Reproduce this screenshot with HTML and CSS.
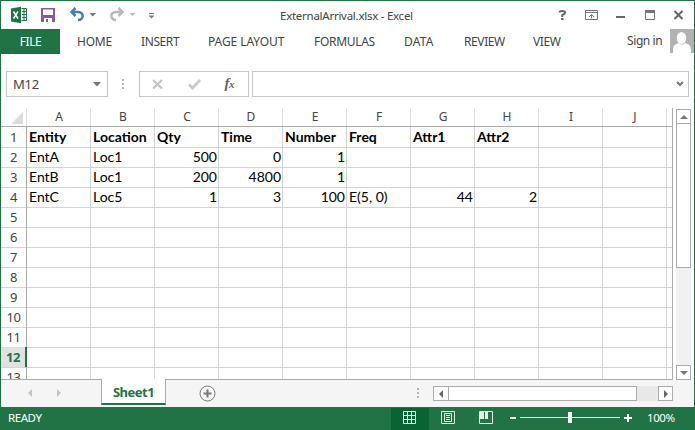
FILE: index.html
```
<!DOCTYPE html>
<html lang="en">
<head>
<meta charset="utf-8">
<title>ExternalArrival.xlsx - Excel</title>
<link rel="stylesheet" href="styles.css">
</head>
<body>
<div class="window">
  <header class="titlebar">
    <svg class="quick" width="170" height="28" viewBox="1 1 170 28">
      <path d="M11 8.500l10-1.800v16.600l-10-1.800z" fill="#217346"/>
      <path d="M21.500 8.500h5v12h-5" fill="#fff" stroke="#217346"/>
      <path d="M22 11.500h5M22 14.500h5M22 17.500h5M24 9v12" stroke="#217346"/>
      <path d="M13.500 11.500l4.500 7M18 11.500l-4.500 7" stroke="#fff" stroke-width="1.500"/>
      <path d="M41 8h14v14H41z" fill="#8757a9"/>
      <path d="M43 9.500h10V15H43zM44 18h8v4h-8z" fill="#fff"/>
      <path d="M46 19h2v3h-2z" fill="#8757a9"/>
      <path d="M75.500 8L71.500 12l4 4M71.500 12H78c6.500 0 6 8 0 8" fill="none" stroke="#4880b5" stroke-width="2.500"/>
      <path d="M89.500 13h6.500l-3.250 3.500z" fill="#777"/>
      <path d="M118.500 8l4 4-4 4M122.500 12H116c-6.500 0-6 8 0 8" fill="none" stroke="#b9b9b9" stroke-width="2.500"/>
      <path d="M129.500 13h6l-3 3z" fill="#b9b9b9"/>
      <path d="M149 13.500h5" stroke="#777"/><path d="M148.500 15.500h6l-3 3z" fill="#777"/>
    </svg>
    <h1 class="title">ExternalArrival.xlsx - Excel</h1>
    <svg class="controls" width="140" height="28" viewBox="554 1 140 28">
      <path d="M559.500 12.500q0-1.500 2.700-1.500 2.800 0 2.800 1.500 0 1.500-2.700 2.500v2M561 19h2.500" fill="none" stroke="#666" stroke-width="2"/>
      <path d="M585.500 10.500h12v9h-12zM586 12.500h11M591.500 18.500v-4M589 17l2.500-2.500 2.500 2.500" fill="none" stroke="#777"/>
      <path d="M616 17h9" stroke="#666" stroke-width="2"/>
      <path d="M645.500 11v8.500h9V11" fill="none" stroke="#777"/><path d="M645 10h10v3h-10z" fill="#777"/>
      <path d="M674.500 11l8 8M682.500 11l-8 8" stroke="#666" stroke-width="2"/>
    </svg>
  </header>
  <nav class="ribbon">
    <span class="file">FILE</span>
    <span class="tab home">HOME</span><span class="tab insert">INSERT</span><span class="tab layout">PAGE LAYOUT</span><span class="tab formulas">FORMULAS</span><span class="tab data">DATA</span><span class="tab review">REVIEW</span><span class="tab view">VIEW</span>
    <span class="signin">Sign in</span>
    <svg class="avatar" width="24" height="24" viewBox="0 0 24 24"><path d="M0 0h24v24H0z" fill="#b2b2b2"/><ellipse cx="11.500" cy="9" rx="4.800" ry="6" fill="#fff"/><path d="M3 24v-3c0-5 3-6 6-7 2 2 4 2 6 0 3 1 6 2 6 7v3z" fill="#fff"/></svg>
  </nav>
  <section class="formula-bar">
    <div class="name-box"><span>M12</span><svg width="8" height="5"><path d="M0 0h8L4 4.500z" fill="#777"/></svg></div>
    <svg class="dots" width="3" height="11"><path d="M0 0h2v2H0zM0 4h2v2H0zM0 8h2v2H0z" fill="#b5b5b5"/></svg>
    <div class="actions">
      <svg width="108" height="24" viewBox="139 72 108 24"><path d="M152 80l9 8.500M161 80l-9 8.500" stroke="#c3c3c3" stroke-width="2.200"/><path d="M188 84.500l3.500 3.500 7.500-8" fill="none" stroke="#c8c8c8" stroke-width="2.700"/><text class="fx" x="223.500" y="87.500">f<tspan class="sub" dx="-0.500" dy="0">x</tspan></text></svg>
    </div>
    <div class="formula"><svg width="9" height="6"><path d="M1 1l3 3 3-3" fill="none" stroke="#777" stroke-width="2"/></svg></div>
  </section>
  <section class="workspace">
    <div class="sheet">
      <div class="columns"><div class="corner"><svg width="12" height="12"><path d="M12 0v12H0z" fill="#dcdcdc"/></svg></div><b>A</b><b>B</b><b>C</b><b>D</b><b>E</b><b>F</b><b>G</b><b>H</b><b>I</b><b>J</b></div>
      <div class="rows" id="rows"></div>
    </div>
    <div class="vscroll">
      <div class="arrow"><svg width="8" height="4"><path d="M0 4l4-4 4 4z" fill="#777"/></svg></div>
      <div class="vthumb"></div>
      <div class="vtrack"></div>
      <div class="arrow"><svg width="8" height="4"><path d="M0 0l4 4 4-4z" fill="#777"/></svg></div>
    </div>
  </section>
  <section class="sheetbar">
    <svg class="sheet-nav" width="100" height="27"><path d="M31 9v8l-4-4zM56 9v8l4-4z" fill="#c3c3c3"/></svg>
    <div class="sheet-tab">Sheet1</div>
    <svg class="add" width="17" height="17"><circle cx="8.500" cy="8.500" r="7.500" fill="none" stroke="#777"/><path d="M4.500 8.500h8M8.500 4.500v8" stroke="#777" stroke-width="2"/></svg>
    <svg class="dots" width="3" height="11"><path d="M0 0h2v2H0zM0 4h2v2H0zM0 8h2v2H0z" fill="#b5b5b5"/></svg>
    <div class="hscroll"><div class="arrow"><svg width="4" height="8"><path d="M4 0v8L0 4z" fill="#666"/></svg></div><div class="hthumb"></div><div class="htrack"></div><div class="arrow"><svg width="4" height="8"><path d="M0 0v8l4-4z" fill="#666"/></svg></div></div>
  </section>
  <footer class="status">
    <span class="ready">READY</span>
    <svg class="view-tools" width="252" height="23" viewBox="390 407 252 23">
      <path d="M391 408h38v22h-38z" fill="#0a6332"/>
      <path d="M403.500 411.500h12v12h-12zM407.500 411v13M411.500 411v13M403 415.500h13M403 419.500h13" fill="none" stroke="#fff"/>
      <path d="M441.500 411.500h13v12h-13zM444.500 413.500h7v8h-7zM446 415.500h4M446 417.500h4M446 419.500h4" fill="none" stroke="#e4f0e8"/>
      <path d="M479.500 411.500h13v12h-13z" fill="none" stroke="#e4f0e8"/><path d="M480 411h4v8h-4zM485 411h3v8h-3z" fill="#e4f0e8"/>
      <path d="M510 418h6M624 418h8M628 414v8" stroke="#fff" stroke-width="2"/><path d="M520 417.500h100" stroke="#fff"/><path d="M568 412h4v11h-4z" fill="#fff"/>
    </svg>
    <span class="percent">100%</span>
  </footer>
</div>
<script src="sheet.js"></script>
</body>
</html>
```
FILE: styles.css
```
* { box-sizing: border-box; }
body { margin: 0; background: #fff; font-family: "Noto Sans", sans-serif; font-size: 12px; color: #444; }
svg { display: block; flex: none; }
.window { width: 695px; height: 430px; overflow: hidden; display: flex; flex-direction: column; border: 1px solid #217346; border-bottom: 0; }
.titlebar { height: 28px; display: flex; flex: none; }
.title { margin: 0 auto 0 109px; padding-top: 6px; font-size: 11.500px; line-height: 17px; font-weight: 400; letter-spacing: -0.260px; white-space: nowrap; }
.ribbon { height: 42px; flex: none; display: grid; grid-template-columns: 59px 17px 64px 67px 106px 90px 60px 69px 94px 43px 24px; align-items: start; line-height: 26px; letter-spacing: -0.400px; white-space: nowrap; }
.file { height: 25px; background: #217346; color: #fff; text-align: center; line-height: 26px; }
.home { grid-column: 3; letter-spacing: -0.200px; }
.layout { letter-spacing: -0.080px; }
.formulas { letter-spacing: -0.300px; }
.data { letter-spacing: 0.200px; }
.signin { line-height: 24px; }
.formula-bar { height: 37px; flex: none; display: flex; padding: 0 5px; }
.name-box { width: 102px; height: 26px; border: 1px solid #c6c6c6; padding: 0 6px; display: flex; align-items: center; justify-content: space-between; font-size: 13px; letter-spacing: -0.300px; }
.formula-bar .dots { margin: 8px 14px 0; }
.actions { width: 110px; height: 26px; border: 1px solid #c6c6c6; }
.fx { font: italic bold 15px "Liberation Serif", serif; fill: #666; }
.sub { font-size: 11px; }
.formula { width: 438px; height: 26px; margin-left: 3px; border: 1px solid #c6c6c6; padding: 9px 3px; display: flex; justify-content: flex-end; }
.workspace { height: 272px; flex: none; display: flex; }
.sheet { width: 672px; height: 272px; overflow: hidden; border-right: 1px solid #ababab; border-bottom: 1px solid #ababab; }
.columns { height: 19px; display: grid; grid-template-columns: 26px repeat(10, 64px); border-bottom: 1px solid #ababab; line-height: 18px; text-align: center; }
.columns b { font-weight: 400; border-right: 1px solid #e1e1e1; padding-left: 1px; }
.corner { border-right: 1px solid #e1e1e1; padding: 4px 0 0 10px; }
.rows { color: #000; font: 14px/19px Lato, sans-serif; }
.row { height: 20px; display: grid; grid-template-columns: 26px repeat(10, 64px) 6px; }
.row > * { border-right: 1px solid #d4d4d4; border-bottom: 1px solid #d4d4d4; padding: 0 2px; white-space: nowrap; }
.row > :last-child { border-right: 0; }
.row > .num { border-right-color: #ababab; color: #444; text-align: center; font: 13px/20px "Noto Sans", sans-serif; letter-spacing: -0.500px; }
.row > .current { color: #217346; background: #e1e1e1; font-weight: 700; border-right: 2px solid #217346; }
.row > .value { text-align: right; padding-right: 1px; }
.heading { font-weight: 700; }
.vscroll { width: 15px; height: 271px; margin: 1px 0 0 3px; display: flex; flex-direction: column; }
.arrow { width: 15px; height: 15px; border: 1px solid #ababab; background: #fff; display: flex; align-items: center; justify-content: center; flex: none; }
.vthumb { height: 145px; margin-top: -1px; border: 1px solid #ababab; background: #fff; }
.vtrack { flex: 1; background: #f0f0f0; }
.sheetbar { height: 27px; flex: none; background: #f5f5f5; display: flex; }
.sheet-tab { width: 65px; height: 26px; margin-top: -1px; background: #fff; border: solid #ababab; border-width: 0 1px; border-bottom: 2px solid #217346; color: #217346; font-weight: 700; font-size: 13px; line-height: 26px; text-align: center; letter-spacing: -0.500px; }
.add { margin: 5px 211px 0 33px; }
.sheetbar .dots { margin: 8px 14px 0 -10px; }
.hscroll { width: 239px; height: 15px; margin-top: 6px; display: flex; }
.hscroll .arrow:first-child { width: 16px; }
.hscroll { margin-left: -1px; width: 240px; }
.hthumb { width: 189px; margin-left: -1px; border: 1px solid #ababab; background: #fff; }
.htrack { flex: 1; background: #e8e8e8; }
.status { height: 23px; flex: none; background: #217346; color: #fff; display: flex; line-height: 22px; font-size: 11.500px; letter-spacing: -0.450px; }
.ready { width: 389px; padding-left: 7px; }
.percent { padding-left: 5px; }
```
FILE: sheet.js
```
const data = [
  ["Entity", "Location", "Qty", "Time", "Number", "Freq", "Attr1", "Attr2"],
  ["EntA", "Loc1", 500, 0, 1], ["EntB", "Loc1", 200, 4800, 1],
  ["EntC", "Loc5", 1, 3, 100, "E(5, 0)", 44, 2]
];
const rows = document.getElementById("rows");
for (let i = 0; i < 13; i++) {
  const row = document.createElement("div");
  row.className = "row";
  const num = document.createElement("span");
  num.className = i === 11 ? "num current" : "num";
  num.textContent = i + 1;
  row.append(num);
  for (let j = 0; j < 11; j++) {
    const cell = document.createElement("span");
    const value = data[i] && data[i][j];
    if (i === 0) cell.className = "heading";
    if (typeof value === "number") cell.className = "value";
    cell.textContent = value ?? "";
    row.append(cell);
  }
  rows.append(row);
}
```
